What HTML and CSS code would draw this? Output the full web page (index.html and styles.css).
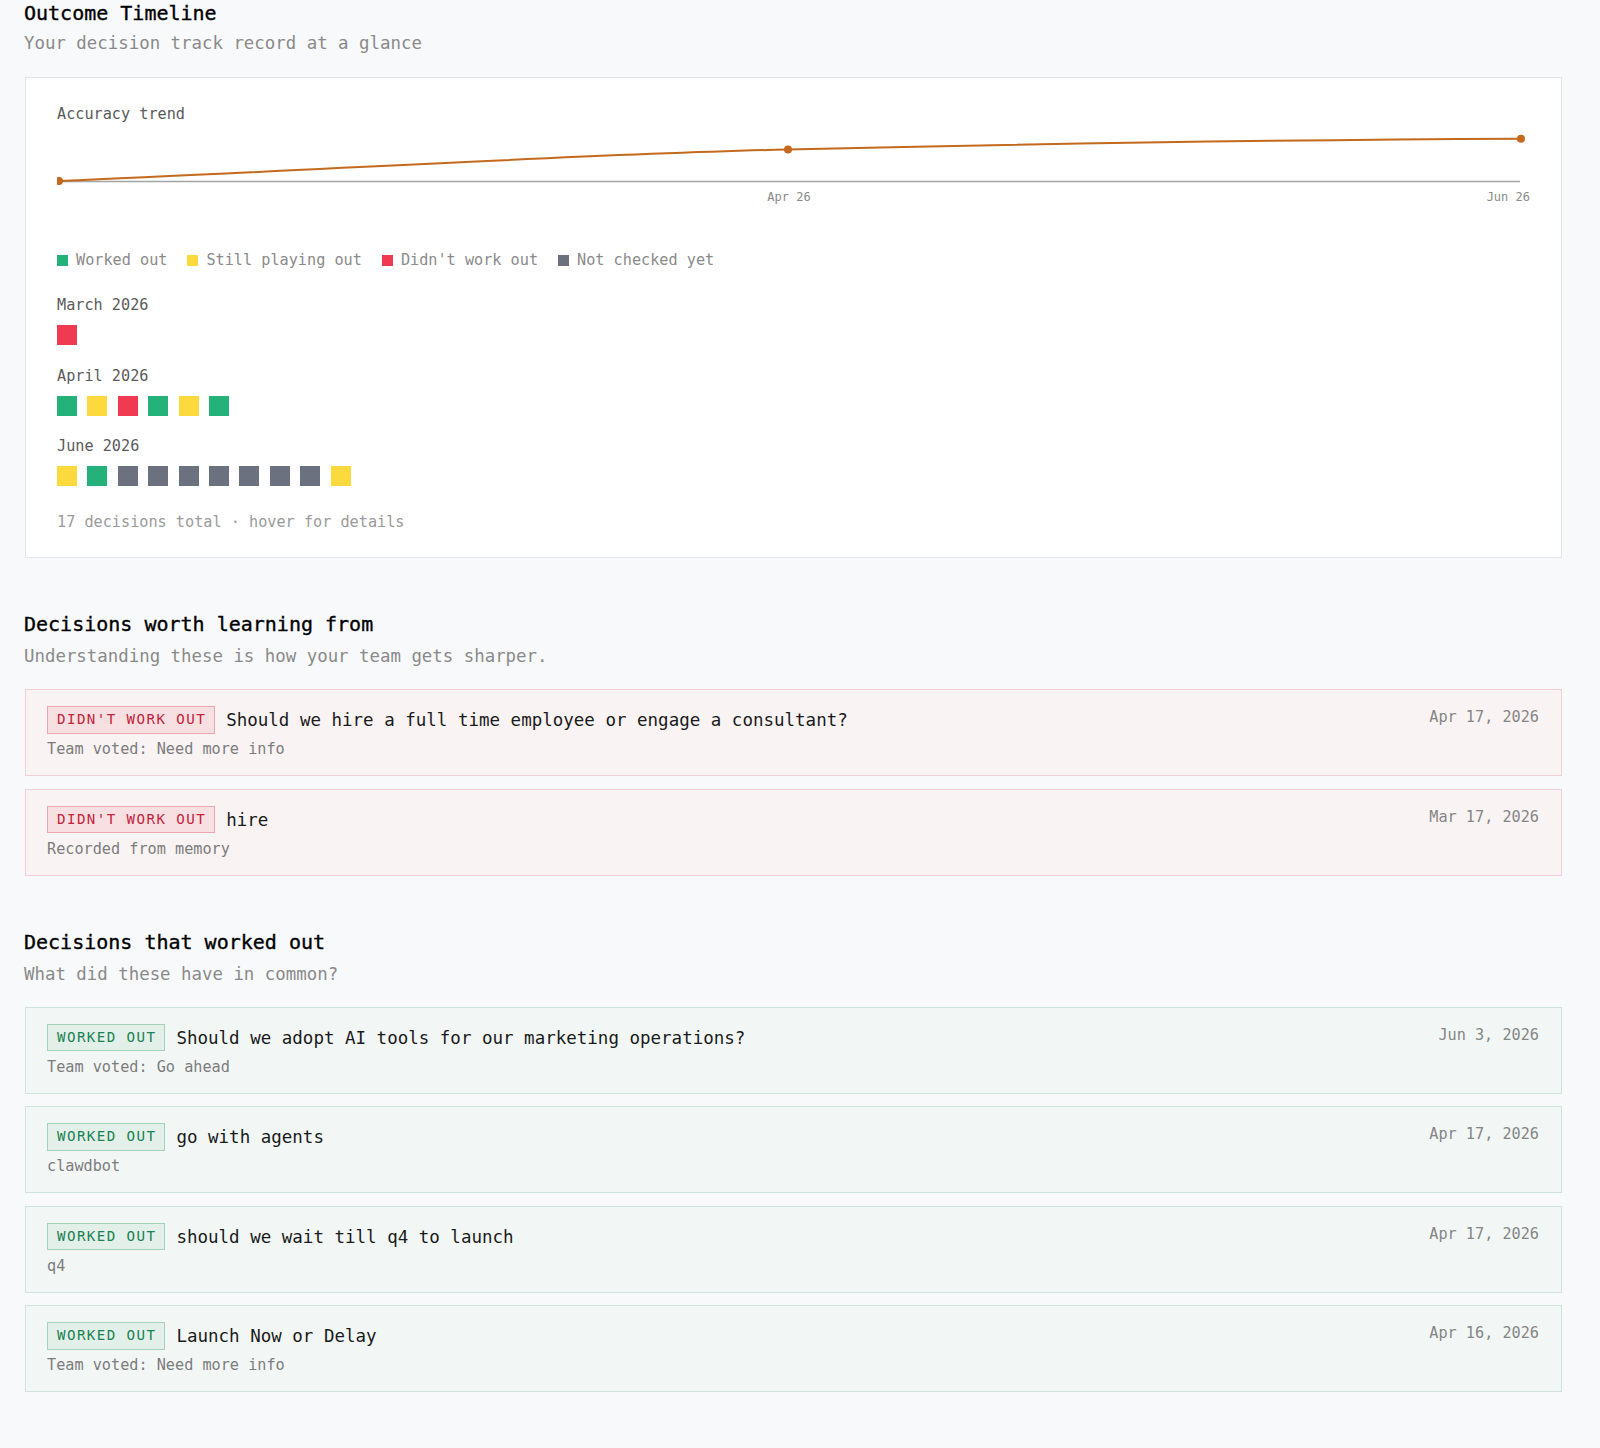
FILE: index.html
```html
<!DOCTYPE html>
<html lang="en">
<head>
  <meta charset="UTF-8">
  <meta name="viewport" content="width=device-width, initial-scale=1.0">
  <title>Outcome Timeline</title>
  <link rel="stylesheet" href="styles.css">
</head>
<body>
<main class="page">
  <section class="block">
    <h2 class="block-title">Outcome Timeline</h2>
    <p class="block-sub">Your decision track record at a glance</p>

    <div class="panel">
      <div class="panel-label">Accuracy trend</div>
      <svg class="trend" width="1473" height="90" viewBox="0 0 1473 90">
        <line x1="2" y1="56.5" x2="1463" y2="56.5" stroke="#a3a3a3" stroke-width="1.5"/>
        <path d="M2 56 C 250 46, 500 30, 731 24.5 S 1200 15, 1464 13.7" fill="none" stroke="#c4691d" stroke-width="2"/>
        <circle cx="2" cy="56" r="4" fill="#c4691d"/>
        <circle cx="731" cy="24.5" r="4" fill="#c4691d"/>
        <circle cx="1464" cy="13.7" r="4" fill="#c4691d"/>
        <text x="732" y="76" text-anchor="middle" class="tick">Apr 26</text>
        <text x="1473" y="76" text-anchor="end" class="tick">Jun 26</text>
      </svg>

      <ul class="legend">
        <li><span class="sq sq-sm good"></span>Worked out</li>
        <li><span class="sq sq-sm pending"></span>Still playing out</li>
        <li><span class="sq sq-sm bad"></span>Didn't work out</li>
        <li><span class="sq sq-sm unchecked"></span>Not checked yet</li>
      </ul>

      <div class="month">
        <div class="month-name">March 2026</div>
        <div class="cells">
          <span class="sq bad"></span>
        </div>
      </div>
      <div class="month">
        <div class="month-name">April 2026</div>
        <div class="cells">
          <span class="sq good"></span>
          <span class="sq pending"></span>
          <span class="sq bad"></span>
          <span class="sq good"></span>
          <span class="sq pending"></span>
          <span class="sq good"></span>
        </div>
      </div>
      <div class="month">
        <div class="month-name">June 2026</div>
        <div class="cells">
          <span class="sq pending"></span>
          <span class="sq good"></span>
          <span class="sq unchecked"></span>
          <span class="sq unchecked"></span>
          <span class="sq unchecked"></span>
          <span class="sq unchecked"></span>
          <span class="sq unchecked"></span>
          <span class="sq unchecked"></span>
          <span class="sq unchecked"></span>
          <span class="sq pending"></span>
        </div>
      </div>

      <div class="panel-foot">17 decisions total · hover for details</div>
    </div>
  </section>

  <section class="block">
    <h2 class="block-title">Decisions worth learning from</h2>
    <p class="block-sub">Understanding these is how your team gets sharper.</p>

    <div class="cards">
      <div class="card card-bad">
        <div class="card-main">
          <div class="card-row">
            <span class="badge badge-bad">Didn't work out</span>
            <span class="card-title">Should we hire a full time employee or engage a consultant?</span>
          </div>
          <div class="card-note">Team voted: Need more info</div>
        </div>
        <div class="card-date">Apr 17, 2026</div>
      </div>
      <div class="card card-bad">
        <div class="card-main">
          <div class="card-row">
            <span class="badge badge-bad">Didn't work out</span>
            <span class="card-title">hire</span>
          </div>
          <div class="card-note">Recorded from memory</div>
        </div>
        <div class="card-date">Mar 17, 2026</div>
      </div>
    </div>
  </section>

  <section class="block">
    <h2 class="block-title">Decisions that worked out</h2>
    <p class="block-sub">What did these have in common?</p>

    <div class="cards">
      <div class="card card-good">
        <div class="card-main">
          <div class="card-row">
            <span class="badge badge-good">Worked out</span>
            <span class="card-title">Should we adopt AI tools for our marketing operations?</span>
          </div>
          <div class="card-note">Team voted: Go ahead</div>
        </div>
        <div class="card-date">Jun 3, 2026</div>
      </div>
      <div class="card card-good">
        <div class="card-main">
          <div class="card-row">
            <span class="badge badge-good">Worked out</span>
            <span class="card-title">go with agents</span>
          </div>
          <div class="card-note">clawdbot</div>
        </div>
        <div class="card-date">Apr 17, 2026</div>
      </div>
      <div class="card card-good">
        <div class="card-main">
          <div class="card-row">
            <span class="badge badge-good">Worked out</span>
            <span class="card-title">should we wait till q4 to launch</span>
          </div>
          <div class="card-note">q4</div>
        </div>
        <div class="card-date">Apr 17, 2026</div>
      </div>
      <div class="card card-good">
        <div class="card-main">
          <div class="card-row">
            <span class="badge badge-good">Worked out</span>
            <span class="card-title">Launch Now or Delay</span>
          </div>
          <div class="card-note">Team voted: Need more info</div>
        </div>
        <div class="card-date">Apr 16, 2026</div>
      </div>
    </div>
  </section>
</main>
</body>
</html>
```

FILE: styles.css
```css
html,body{
  margin: 0;
  background: #f8f9fb;
  font-family: "DejaVu Sans Mono", "Liberation Mono", monospace;
  color: #1c1c1e;
}
.page{
  width: 1537px;
  margin-left: 25px;
  padding: 1px 0 50px;
}
.block + .block{
  margin-top: 54px;
}
.block-title{
  margin: 0 0 0 -1px;
  font-size: 20px;
  line-height: 24px;
  font-weight: normal;
  color: #000;
  -webkit-text-stroke: 0.35px #000;
}
.block-sub{
  margin: 8px 0 0 -1px;
  font-size: 17.4px;
  line-height: 24px;
  color: #8a8a8a;
}
.block:first-child .block-sub{
  margin-top: 6px;
}

/* chart panel */
.panel{
  margin-top: 22px;
  background: #fff;
  border: 1px solid #e3e5e8;
  padding: 26px 31px 25px;
}
.panel-label{
  font-size: 15.2px;
  line-height: 20px;
  color: #5a5a5a;
}
.trend{
  display: block;
  margin-top: 1px;
  overflow: hidden;
}
.tick{
  font-family: "DejaVu Sans Mono", monospace;
  font-size: 12px;
  fill: #8a8a8a;
}
.legend{
  list-style: none;
  margin: 35px 0 0;
  padding: 0;
  display: flex;
  gap: 20px;
  font-size: 15.2px;
  line-height: 20px;
  color: #8a8a8a;
}
.legend li{
  display: flex;
  align-items: center;
  gap: 8px;
}
.month{
  margin-top: 25px;
}
.month + .month{
  margin-top: 20.5px;
}
.month-name{
  font-size: 15.2px;
  line-height: 20px;
  color: #5a5a5a;
}
.cells{
  display: flex;
  gap: 10.4px;
  margin-top: 10px;
}
.sq{
  width: 20px;
  height: 20px;
  display: block;
}
.sq-sm{
  width: 11px;
  height: 11px;
}
.good{ background: #24b27a; }
.pending{ background: #fcd93c; }
.bad{ background: #f03a52; }
.unchecked{ background: #6b717f; }
.panel-foot{
  margin-top: 26px;
  font-size: 15.2px;
  line-height: 20px;
  color: #9a9a9a;
}

/* decision cards */
.cards{
  margin-top: 21px;
  display: flex;
  flex-direction: column;
  gap: 12.5px;
}
.card{
  display: flex;
  justify-content: space-between;
  align-items: flex-start;
  padding: 16px 22px 16px 21px;
  border: 1px solid;
}
.card-bad{
  background: #f9f3f4;
  border-color: #f1cfd4;
}
.card-good{
  background: #f2f7f6;
  border-color: #cfe3dc;
}
.card-row{
  display: flex;
  align-items: center;
  gap: 11px;
  height: 28px;
}
.badge{
  font-size: 14.2px;
  line-height: 17.6px;
  letter-spacing: 1.4px;
  text-transform: uppercase;
  padding: 4px 8px 4px 9px;
  border: 1px solid;
}
.badge-bad{
  background: #f8dfe2;
  border-color: #eaa9b0;
  color: #c4243a;
}
.badge-good{
  background: #e2f0e9;
  border-color: #a3d1ba;
  color: #1a8152;
}
.card-title{
  font-size: 17.5px;
  color: #1a1a1a;
}
.card-note{
  margin-top: 5px;
  font-size: 15.2px;
  line-height: 20px;
  color: #7c7c7c;
}
.card-date{
  margin-top: 1px;
  font-size: 15.2px;
  line-height: 20px;
  color: #858585;
}
```
